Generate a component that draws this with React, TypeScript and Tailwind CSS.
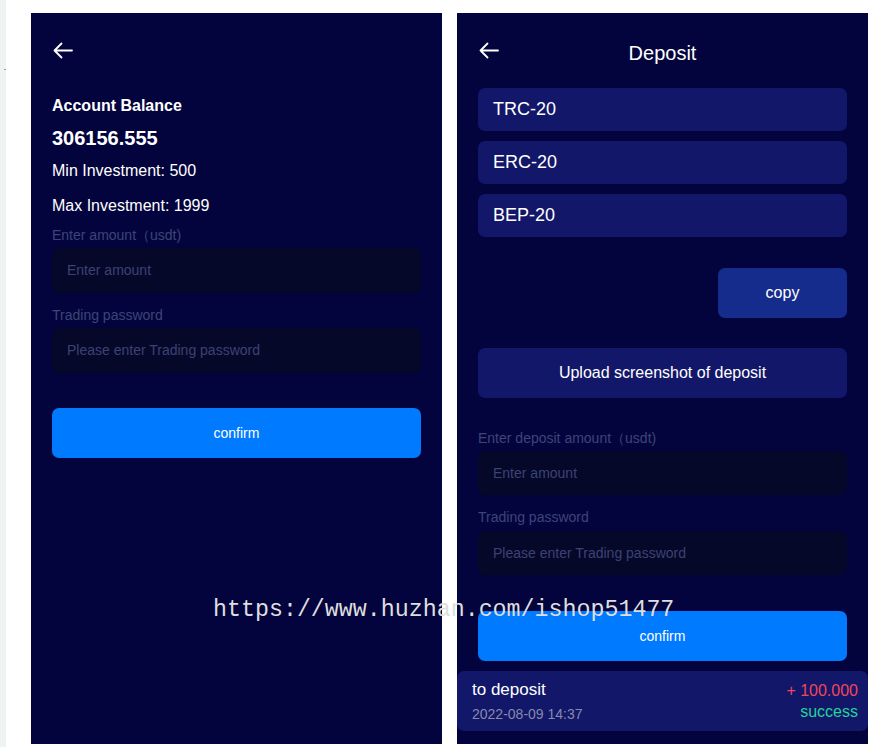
import React from 'react';

const sans = 'font-["Liberation_Sans",Arial,sans-serif]';

function BackArrow() {
  return (
    <svg width="21" height="17" viewBox="0 0 21 17" fill="none">
      <path
        d="M9.5 1.5 L2.5 8.5 L9.5 15.5 M2.5 8.5 H20"
        stroke="#ffffff"
        strokeWidth="1.8"
        strokeLinecap="round"
        strokeLinejoin="round"
      />
    </svg>
  );
}

function Field({ label, placeholder, labelGap, h }: { label: string; placeholder: string; labelGap: string; h: string }) {
  return (
    <>
      <div className="text-[14px] leading-[18px] text-[#3d4478]">{label}</div>
      <div className={`${labelGap} ${h} rounded-[7px] bg-[#050829] flex items-center px-[15px]`}>
        <input
          placeholder={placeholder}
          className="w-full bg-transparent outline-none text-[14px] text-white placeholder:text-[#3d4275]"
        />
      </div>
    </>
  );
}

// Invest form panel
function InvestPanel() {
  return (
    <div className="mt-[13px] w-[411px] h-[731px] bg-[#03043d] px-[21px] flex flex-col text-white">
      <div className="mt-[29px] h-[17px]">
        <BackArrow />
      </div>
      <div className="mt-[37px] text-[16px] leading-[20px] font-bold">Account Balance</div>
      <div className="mt-[10px] text-[20px] leading-[24px] font-bold">306156.555</div>
      <div className="mt-[11px] text-[16px] leading-[20px]">Min Investment: 500</div>
      <div className="mt-[15px] mb-[10px] text-[16px] leading-[20px]">Max Investment: 1999</div>
      <Field label="Enter amount（usdt)" placeholder="Enter amount" labelGap="mt-[4px]" h="h-[45px]" />
      <div className="mt-[13px]" />
      <Field label="Trading password" placeholder="Please enter Trading password" labelGap="mt-[4px]" h="h-[45px]" />
      <button className="mt-[35px] h-[50px] rounded-[7px] bg-[#007aff] text-[14px] text-white">confirm</button>
    </div>
  );
}

// Deposit panel with network list and history
function DepositPanel() {
  const networks = ['TRC-20', 'ERC-20', 'BEP-20'];
  return (
    <div className="mt-[13px] w-[411px] h-[731px] bg-[#03043d] flex flex-col text-white">
      <div className="px-[21px] flex flex-col">
        <div className="mt-[20px] h-[40px] flex items-center">
          <div className="w-[24px] -mt-[6px]">
            <BackArrow />
          </div>
          <div className="flex-1 text-center text-[20px]">Deposit</div>
          <div className="w-[24px]" />
        </div>
        <div className="mt-[15px] flex flex-col gap-[10px]">
          {networks.map((n) => (
            <div key={n} className="h-[43px] rounded-[7px] bg-[#12176a] flex items-center px-[15px] text-[18px]">
              {n}
            </div>
          ))}
        </div>
        <button className="mt-[31px] self-end w-[129px] h-[50px] rounded-[7px] bg-[#152c8c] text-[16px] text-white">
          copy
        </button>
        <button className="mt-[30px] h-[50px] rounded-[7px] bg-[#12176a] text-[16px] text-white">
          Upload screenshot of deposit
        </button>
        <div className="mt-[31px]" />
        <Field label="Enter deposit amount（usdt)" placeholder="Enter amount" labelGap="mt-[4px]" h="h-[44px]" />
        <div className="mt-[13px]" />
        <Field label="Trading password" placeholder="Please enter Trading password" labelGap="mt-[5px]" h="h-[44px]" />
        <button className="mt-[36px] h-[50px] rounded-[7px] bg-[#007aff] text-[14px] text-white">confirm</button>
      </div>
      <div className="mt-[10px] h-[60px] rounded-[7px] bg-[#12176a] pl-[15px] pr-[10px] flex items-center justify-between">
        <div className="flex flex-col">
          <span className="text-[17px] leading-[20px]">to deposit</span>
          <span className="mt-[5px] text-[14px] leading-[18px] text-[#878aa9]">2022-08-09 14:37</span>
        </div>
        <div className="flex flex-col items-end">
          <span className="text-[16px] leading-[20px] text-[#f0465b]">+ 100.000</span>
          <span className="mt-[1px] text-[16px] leading-[20px] text-[#25d39b]">success</span>
        </div>
      </div>
    </div>
  );
}

export default function App() {
  return (
    <div className={`${sans} relative w-[889px] h-[747px] bg-white flex overflow-hidden`}>
      <div className="w-[6px] h-full bg-[#eff3f4] relative">
        <div className="absolute left-[4px] top-[69px] w-[2px] h-[1px] bg-[#9aa0a4]" />
      </div>
      <div className="ml-[25px]">
        <InvestPanel />
      </div>
      <div className="ml-[15px]">
        <DepositPanel />
      </div>
      <div className='absolute left-[213px] top-[596px] font-["Liberation_Mono",monospace] text-[23.3px] leading-[28px] text-[#dedede] whitespace-nowrap'>
        https://www.huzhan.com/ishop51477
      </div>
    </div>
  );
}
